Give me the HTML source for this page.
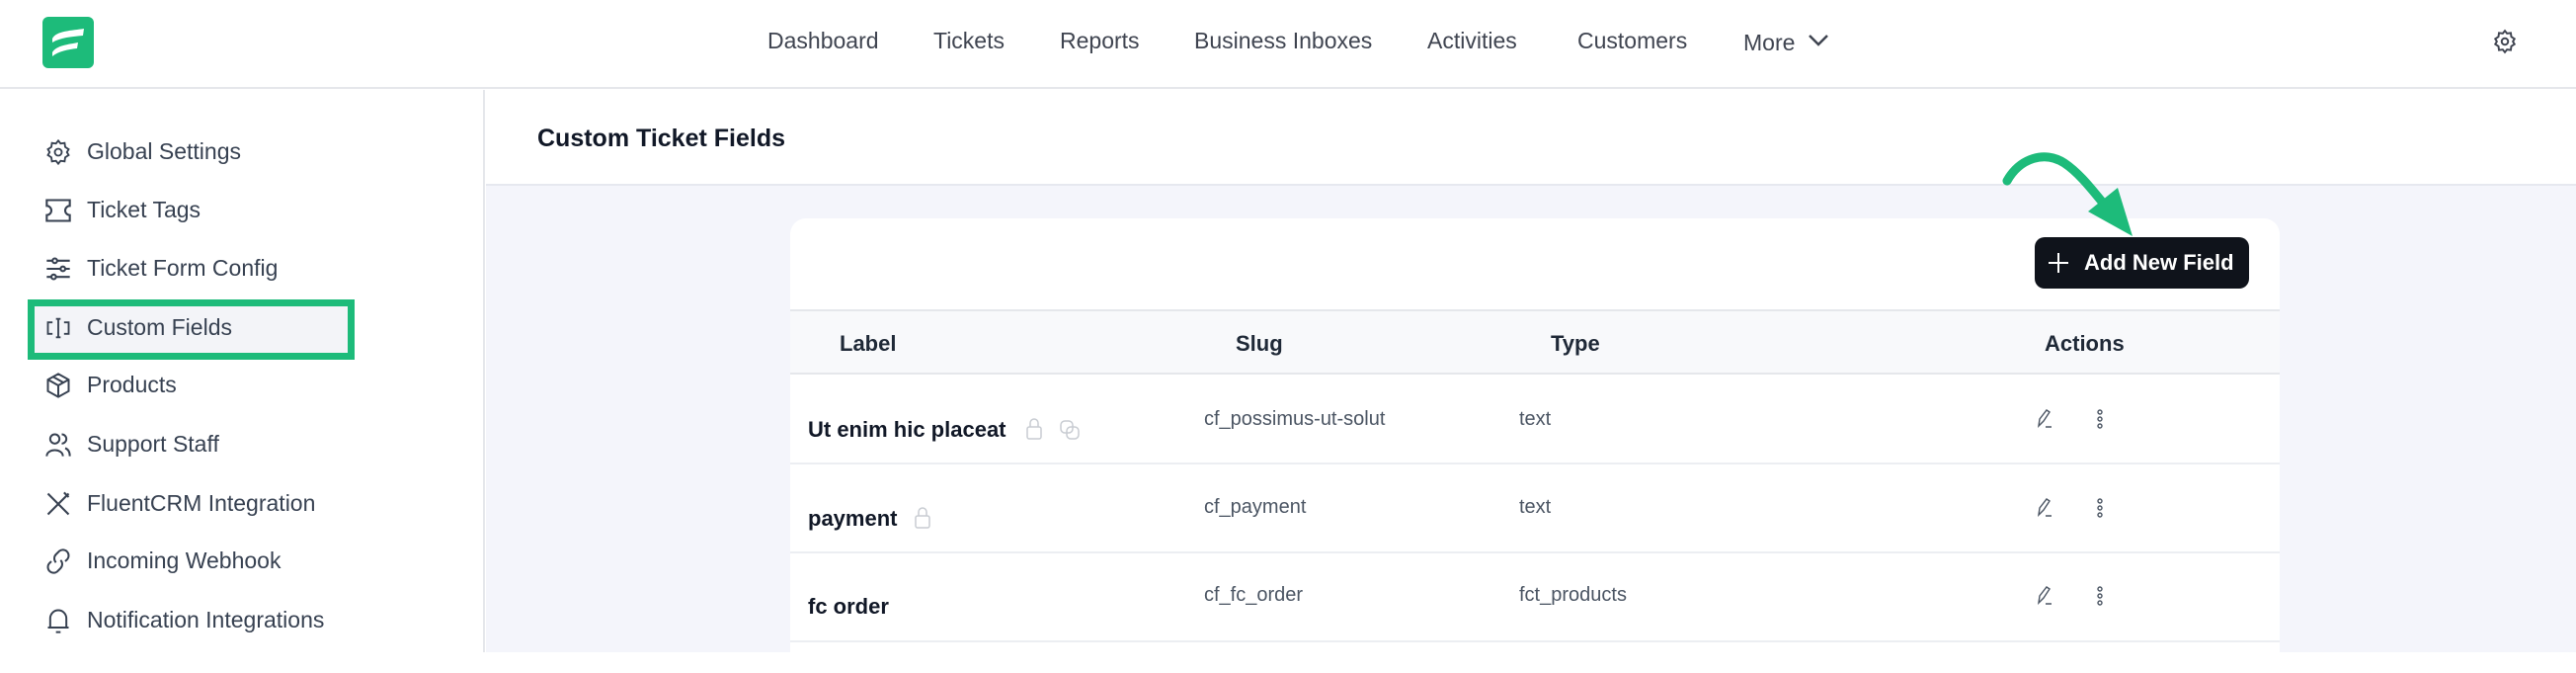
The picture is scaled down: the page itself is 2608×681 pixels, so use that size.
<!DOCTYPE html>
<html><head><meta charset="utf-8"><style>
*{box-sizing:border-box;margin:0;padding:0}
body{width:2608px;height:660px;overflow:hidden;background:#fff;font-family:"Liberation Sans",sans-serif;position:relative;color:#1f2937}
.abs{position:absolute}
.hdr{left:0;top:0;width:2608px;height:90px;border-bottom:2px solid #e5e7eb;background:#fff}
.nav{top:28px;font-size:23px;color:#3f4450;white-space:nowrap}
.side{left:0;top:91px;width:491px;height:569px;border-right:2px solid #e5e7eb;background:#fff}
.si{left:88px;font-size:23px;color:#374151;white-space:nowrap}
.ic{left:45px;width:28px;height:28px}
.main{left:492px;top:91px;width:2116px;height:569px;background:#f4f5fb}
.th{top:0;height:97px;width:2116px;left:0;background:#fff;border-bottom:2px solid #e6e8ef}
.card{left:800px;top:221px;width:1508px;height:460px;background:#fff;border-radius:16px}
.hrow{left:0;top:92px;width:1508px;height:66px;background:#f8f9fb;border-top:2px solid #e5e7eb;border-bottom:2px solid #e5e7eb}
.hc{font-size:22px;font-weight:bold;color:#1f2937;top:20px}
.line{left:0;width:1508px;height:2px;background:#eceef2}
.lbl{font-size:22px;font-weight:bold;color:#111827;left:18px}
.val{font-size:20px;color:#4b5563}
</style></head><body>
<div class="abs hdr"></div>
<svg class="abs" style="left:43px;top:17px" width="52" height="52" viewBox="0 0 52 52"><rect width="52" height="52" rx="6" fill="#1dbb7a"/><path d="M10 22 C14 14 30 14 42 12 L41 19 C30 20 18 21 10 26Z M10 36 C14 29 26 28 36 26 L35 32 C26 33 16 35 10 40Z" fill="#fff"/></svg>
<div class="abs nav" style="left:777px">Dashboard</div>
<div class="abs nav" style="left:945px">Tickets</div>
<div class="abs nav" style="left:1073px">Reports</div>
<div class="abs nav" style="left:1209px">Business Inboxes</div>
<div class="abs nav" style="left:1445px">Activities</div>
<div class="abs nav" style="left:1597px">Customers</div>
<div class="abs nav" style="left:1765px;top:30px">More</div>
<svg class="abs" style="left:1830px;top:34px" width="22" height="14"><path d="M2 2 L11 11 L20 2" stroke="#3f4450" stroke-width="2.5" fill="none"/></svg>
<svg class="abs" style="left:2523px;top:29px" width="26" height="26" viewBox="0 0 24 24" fill="none" stroke="#3f4450" stroke-width="1.8"><path d="M12 2 L14 4.5 L17.5 4 L18 7.5 L21 9.5 L19.5 12 L21 14.5 L18 16.5 L17.5 20 L14 19.5 L12 22 L10 19.5 L6.5 20 L6 16.5 L3 14.5 L4.5 12 L3 9.5 L6 7.5 L6.5 4 L10 4.5Z"/><circle cx="12" cy="12" r="3"/></svg>

<div class="abs side">
<div class="abs" style="left:28px;top:212px;width:331px;height:61px;border:7px solid #1dbb7a;background:#f3f4f8"></div>
</div>
<div class="abs si" style="top:140px">Global Settings</div>
<div class="abs si" style="top:199px">Ticket Tags</div>
<div class="abs si" style="top:258px">Ticket Form Config</div>
<div class="abs si" style="top:318px">Custom Fields</div>
<div class="abs si" style="top:376px">Products</div>
<div class="abs si" style="top:436px">Support Staff</div>
<div class="abs si" style="top:496px">FluentCRM Integration</div>
<div class="abs si" style="top:554px">Incoming Webhook</div>
<div class="abs si" style="top:614px">Notification Integrations</div>
<svg class="abs ic" style="top:140px" viewBox="0 0 24 24" fill="none" stroke="#374151" stroke-width="1.6"><path d="M12 2 L14 4.5 L17.5 4 L18 7.5 L21 9.5 L19.5 12 L21 14.5 L18 16.5 L17.5 20 L14 19.5 L12 22 L10 19.5 L6.5 20 L6 16.5 L3 14.5 L4.5 12 L3 9.5 L6 7.5 L6.5 4 L10 4.5Z"/><circle cx="12" cy="12" r="3"/></svg>
<svg class="abs ic" style="top:199px" viewBox="0 0 24 24" fill="none" stroke="#374151" stroke-width="1.8"><path d="M2 3 H22 V8 A4 4 0 0 0 22 16 V21 H2 V16 A4 4 0 0 0 2 8Z"/></svg>
<svg class="abs ic" style="top:258px" viewBox="0 0 24 24" fill="none" stroke="#374151" stroke-width="1.8"><path d="M2 5H22M2 12H22M2 19H22"/><circle cx="9" cy="5" r="2" fill="#fff"/><circle cx="16" cy="12" r="2" fill="#fff"/><circle cx="8" cy="19" r="2" fill="#fff"/></svg>
<svg class="abs ic" style="top:318px" viewBox="0 0 24 24" fill="none" stroke="#374151" stroke-width="1.6"><path d="M7 7H3V17H7M17 7H21V17H17M10 4H14M10 20H14M12 4V20"/></svg>
<svg class="abs ic" style="top:376px" viewBox="0 0 24 24" fill="none" stroke="#374151" stroke-width="1.7"><path d="M12 2 L21 7 V17 L12 22 L3 17 V7Z M3 7 L12 12 L21 7 M12 12 V22 M7.5 4.5 L16.5 9.5"/></svg>
<svg class="abs ic" style="top:436px" viewBox="0 0 24 24" fill="none" stroke="#374151" stroke-width="1.7"><circle cx="9" cy="7" r="4"/><path d="M2 22 C2 15 16 15 16 22 M15 3 A4 4 0 0 1 15 11 M18 15 C21 16 22 19 22 22"/></svg>
<svg class="abs ic" style="top:496px" viewBox="0 0 24 24" fill="none" stroke="#374151" stroke-width="1.8"><path d="M3 3 L21 21 M21 3 L3 21 M17 2 L21 6"/></svg>
<svg class="abs ic" style="top:554px" viewBox="0 0 24 24" fill="none" stroke="#374151" stroke-width="1.7"><path d="M10 13 A5 5 0 0 1 10 6 L13 3 A5 5 0 0 1 20 10 L18 12 M14 11 A5 5 0 0 1 14 18 L11 21 A5 5 0 0 1 4 14 L6 12"/></svg>
<svg class="abs ic" style="top:614px" viewBox="0 0 24 24" fill="none" stroke="#374151" stroke-width="1.7"><path d="M5 18 V10 A7 7 0 0 1 19 10 V18 H3 H21 M10 22 H14"/></svg>

<div class="abs main">
 <div class="abs th"></div>
</div>
<div class="abs" style="left:544px;top:126px;font-size:25px;font-weight:bold;color:#111827">Custom Ticket Fields</div>

<div class="abs card">
 <div class="abs" style="left:1260px;top:19px;width:217px;height:52px;background:#0f131b;border-radius:10px;color:#fff;font-size:22px;font-weight:bold;padding:14px 0 0 0">
  <svg class="abs" style="left:14px;top:16px" width="20" height="20"><path d="M10 0V20M0 10H20" stroke="#fff" stroke-width="2"/></svg>
  <span class="abs" style="left:50px;top:13px">Add New Field</span></div>
 <div class="abs hrow">
  <div class="abs hc" style="left:50px">Label</div>
  <div class="abs hc" style="left:451px">Slug</div>
  <div class="abs hc" style="left:770px">Type</div>
  <div class="abs hc" style="left:1270px">Actions</div>
 </div>
 <div class="abs lbl" style="top:201px">Ut enim hic placeat</div>
 <svg class="abs" style="left:238px;top:201px" width="18" height="24" viewBox="0 0 18 24" fill="none" stroke="#c8ccd2" stroke-width="1.5"><rect x="2" y="10" width="14" height="12" rx="2"/><path d="M5 10V6A4 4 0 0 1 13 6V10"/></svg>
 <svg class="abs" style="left:272px;top:203px" width="22" height="22" fill="none" stroke="#c8ccd2" stroke-width="1.5"><rect x="2" y="2" width="12" height="12" rx="4"/><rect x="8" y="8" width="12" height="12" rx="4"/></svg>
 <div class="abs val" style="left:419px;top:192px">cf_possimus-ut-solut</div>
 <div class="abs val" style="left:738px;top:192px">text</div>
 <div class="abs line" style="top:247px"></div>
 <div class="abs lbl" style="top:291px">payment</div>
 <svg class="abs" style="left:125px;top:291px" width="18" height="24" viewBox="0 0 18 24" fill="none" stroke="#c8ccd2" stroke-width="1.5"><rect x="2" y="10" width="14" height="12" rx="2"/><path d="M5 10V6A4 4 0 0 1 13 6V10"/></svg>
 <div class="abs val" style="left:419px;top:281px">cf_payment</div>
 <div class="abs val" style="left:738px;top:281px">text</div>
 <div class="abs line" style="top:337px"></div>
 <div class="abs lbl" style="top:380px">fc order</div>
 <div class="abs val" style="left:419px;top:370px">cf_fc_order</div>
 <div class="abs val" style="left:738px;top:370px">fct_products</div>
 <div class="abs line" style="top:427px"></div>
 <svg class="abs" style="left:1260px;top:192px" width="24" height="24" fill="none" stroke="#4b5563" stroke-width="1.4"><path d="M4 18 L5 11 L12 2 L15 4 L9 13 Z M11 19H17"/></svg>
 <svg class="abs" style="left:1260px;top:282px" width="24" height="24" fill="none" stroke="#4b5563" stroke-width="1.4"><path d="M4 18 L5 11 L12 2 L15 4 L9 13 Z M11 19H17"/></svg>
 <svg class="abs" style="left:1260px;top:371px" width="24" height="24" fill="none" stroke="#4b5563" stroke-width="1.4"><path d="M4 18 L5 11 L12 2 L15 4 L9 13 Z M11 19H17"/></svg>
 <svg class="abs" style="left:1321px;top:192px" width="10" height="24" fill="none" stroke="#4b5563" stroke-width="1.4"><circle cx="5" cy="4" r="2"/><circle cx="5" cy="11" r="2"/><circle cx="5" cy="18" r="2"/></svg>
 <svg class="abs" style="left:1321px;top:282px" width="10" height="24" fill="none" stroke="#4b5563" stroke-width="1.4"><circle cx="5" cy="4" r="2"/><circle cx="5" cy="11" r="2"/><circle cx="5" cy="18" r="2"/></svg>
 <svg class="abs" style="left:1321px;top:371px" width="10" height="24" fill="none" stroke="#4b5563" stroke-width="1.4"><circle cx="5" cy="4" r="2"/><circle cx="5" cy="11" r="2"/><circle cx="5" cy="18" r="2"/></svg>
</div>

<svg class="abs" style="left:0;top:0" width="2608" height="660"><path d="M2032 183 C2045 160 2070 152 2090 165 C2105 175 2118 192 2128 204" stroke="#1dbb7a" stroke-width="9" fill="none" stroke-linecap="round"/><path d="M2114 214 L2144 190 L2159 239Z" fill="#1dbb7a"/></svg>
</body></html>
